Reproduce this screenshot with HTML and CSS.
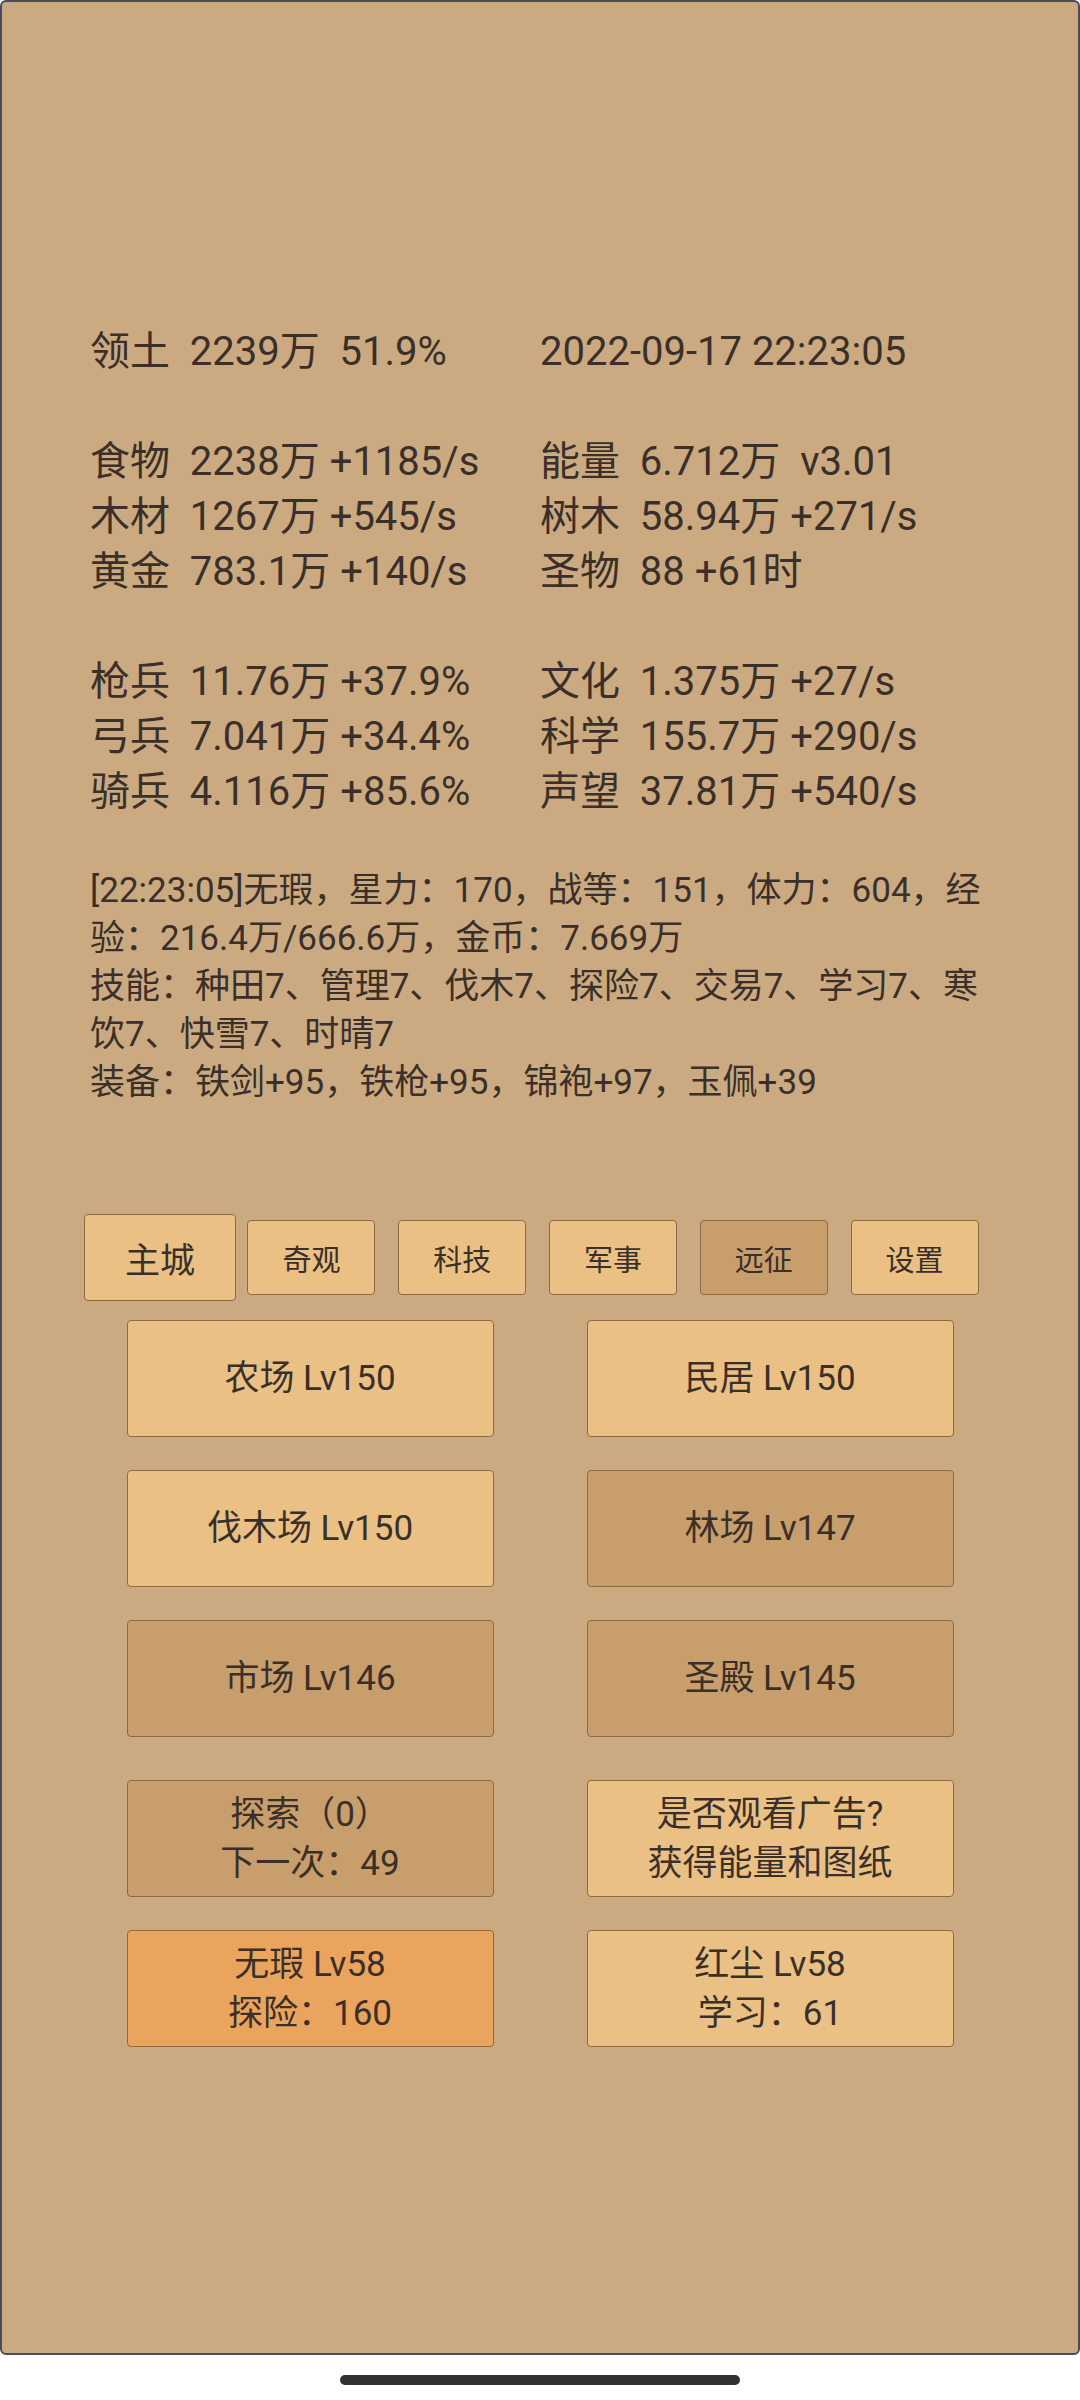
FILE: index.html
```html
<!DOCTYPE html>
<html lang="zh-cn">

<head>
    <meta charset="UTF-8">
    <meta name="viewport" content="width=device-width, initial-scale=1.0">
    <title>主城</title>
    <link rel="stylesheet" href="styles.css">
</head>

<body>

    <div class="screen">

        <!-- 资源 -->
        <div class="stats">
            <div class="group">
                <div class="cell">领土  2239万  51.9%</div>
                <div class="cell">2022-09-17 22:23:05</div>
            </div>
            <div class="group">
                <div class="cell">食物  2238万 +1185/s</div>
                <div class="cell">能量  6.712万  v3.01</div>
                <div class="cell">木材  1267万 +545/s</div>
                <div class="cell">树木  58.94万 +271/s</div>
                <div class="cell">黄金  783.1万 +140/s</div>
                <div class="cell">圣物  88 +61时</div>
            </div>
            <div class="group">
                <div class="cell">枪兵  11.76万 +37.9%</div>
                <div class="cell">文化  1.375万 +27/s</div>
                <div class="cell">弓兵  7.041万 +34.4%</div>
                <div class="cell">科学  155.7万 +290/s</div>
                <div class="cell">骑兵  4.116万 +85.6%</div>
                <div class="cell">声望  37.81万 +540/s</div>
            </div>
        </div>

        <!-- 英雄信息 -->
        <div class="log">
            <p>[22:23:05]无瑕，星力：170，战等：151，体力：604，经验：216.4万/666.6万，金币：7.669万</p>
            <p>技能：种田7、管理7、伐木7、探险7、交易7、学习7、寒饮7、快雪7、时晴7</p>
            <p>装备：铁剑+95，铁枪+95，锦袍+97，玉佩+39</p>
        </div>

        <!-- 标签 -->
        <ul class="tabs">
            <li><div class="tab active">主城</div></li>
            <li><div class="tab">奇观</div></li>
            <li><div class="tab">科技</div></li>
            <li><div class="tab">军事</div></li>
            <li><div class="tab dark">远征</div></li>
            <li><div class="tab">设置</div></li>
        </ul>

        <!-- 建筑 -->
        <div class="buildings">
            <div class="btn">农场 Lv150</div>
            <div class="btn">民居 Lv150</div>
            <div class="btn">伐木场 Lv150</div>
            <div class="btn dark">林场 Lv147</div>
            <div class="btn dark">市场 Lv146</div>
            <div class="btn dark">圣殿 Lv145</div>
        </div>

        <div class="buildings actions">
            <div class="btn dark">探索（0）<br>下一次：49</div>
            <div class="btn">是否观看广告?<br>获得能量和图纸</div>
            <div class="btn orange">无瑕 Lv58<br>探险：160</div>
            <div class="btn">红尘 Lv58<br>学习：61</div>
        </div>

    </div>

    <div class="home-bar"></div>

</body>

</html>
```

FILE: styles.css
```css
* {
    padding: 0;
    margin: 0;
    list-style: none;
    box-sizing: border-box;
}

body {
    width: 1080px;
    height: 2400px;
    background-color: #fff;
    font-family: Roboto, "Noto Sans CJK SC", sans-serif;
    color: #3a3029;
}

.screen {
    width: 1080px;
    height: 2355px;
    border: 2px solid #4b4b5b;
    border-radius: 6px;
    background-color: #cbaa82;
    padding: 322px 88px 0;
}

/* 资源 */
.stats {
    font-size: 40px;
    line-height: 55px;
}

.stats .group {
    display: grid;
    grid-template-columns: 450px 450px;
    margin-bottom: 55px;
}

.stats .group:last-child {
    margin-bottom: 0;
}

.stats .cell {
    white-space: pre;
}

/* 英雄信息 */
.log {
    margin-top: 48px;
    font-size: 35px;
    line-height: 48px;
}

/* 标签 */
.tabs {
    display: flex;
    align-items: center;
    margin: 107px 0 0 -6px;
}

.tabs li {
    width: 152px;
    display: flex;
    justify-content: center;
}

.tab {
    width: 128px;
    height: 75px;
    display: flex;
    align-items: center;
    justify-content: center;
    font-size: 29px;
    background-color: #eac085;
    border: 1px solid #8c6a45;
    border-radius: 4px;
}

.tab.active {
    width: 153px;
    height: 87px;
    font-size: 35px;
}

.tab.dark {
    background-color: #c99e6d;
}

/* 建筑 */
.buildings {
    display: grid;
    grid-template-columns: 367px 367px;
    justify-content: center;
    column-gap: 93px;
    row-gap: 33px;
    margin-top: 19px;
}

.actions {
    margin-top: 43px;
}

.btn {
    height: 117px;
    display: flex;
    align-items: center;
    justify-content: center;
    text-align: center;
    font-size: 35px;
    line-height: 49px;
    background-color: #eac085;
    border: 1px solid #8c6a45;
    border-radius: 4px;
}

.btn.dark {
    background-color: #c99e6d;
}

.btn.orange {
    background-color: #eba45d;
}

.home-bar {
    width: 400px;
    height: 10px;
    margin: 20px auto 0;
    background-color: #333;
    border-radius: 5px;
}
```
